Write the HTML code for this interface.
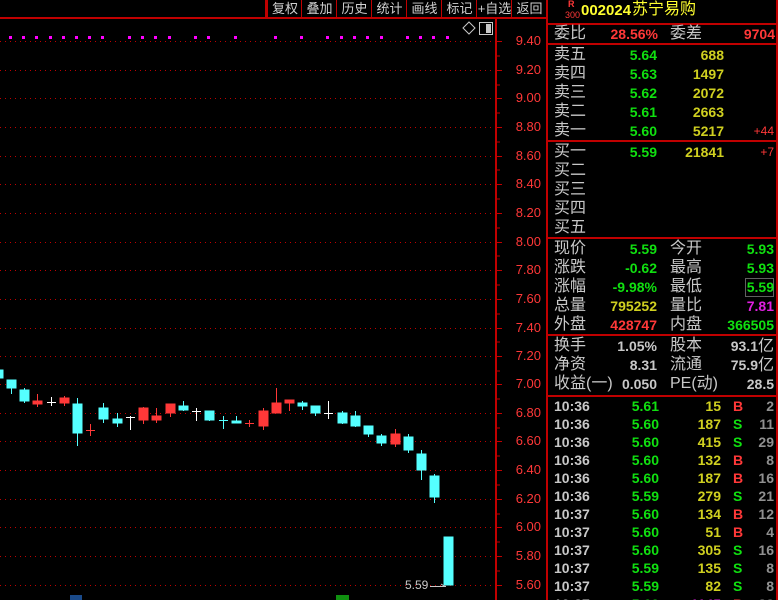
<!DOCTYPE html>
<html style="width:778px;height:600px;overflow:hidden"><head><meta charset="utf-8"><style>
*{margin:0;padding:0}
body{width:778px;height:600px;background:#000;position:relative;overflow:hidden;font-family:"Liberation Sans","Noto Sans CJK SC",sans-serif}
.a{position:absolute;white-space:nowrap;line-height:18px}
.c{font-size:16px;color:#c8c8c8}
.n{font-size:14px;font-weight:bold}
.r{text-align:right}
.g{color:#10e010}.y{color:#d0d020}.rd{color:#ff3838}.w{color:#c8c8c8}.m{color:#e020e0}.gr{color:#909090}
.tb{position:absolute;top:0;height:18px;font-size:13px;color:#d0d0d0;line-height:18px;text-align:center;border-left:1px solid #c00000;white-space:nowrap;overflow:hidden}
.ax{position:absolute;left:500px;width:41px;text-align:right;font-size:13px;color:#ff3838;line-height:14px}
</style></head><body>
<svg width="778" height="600" style="position:absolute;left:0;top:0">
<g stroke="#c00000" stroke-width="1" stroke-dasharray="1,4">
<line x1="0" y1="41.5" x2="495" y2="41.5"/><line x1="0" y1="70.5" x2="495" y2="70.5"/><line x1="0" y1="98.5" x2="495" y2="98.5"/><line x1="0" y1="127.5" x2="495" y2="127.5"/><line x1="0" y1="156.5" x2="495" y2="156.5"/><line x1="0" y1="184.5" x2="495" y2="184.5"/><line x1="0" y1="213.5" x2="495" y2="213.5"/><line x1="0" y1="242.5" x2="495" y2="242.5"/><line x1="0" y1="270.5" x2="495" y2="270.5"/><line x1="0" y1="299.5" x2="495" y2="299.5"/><line x1="0" y1="328.5" x2="495" y2="328.5"/><line x1="0" y1="356.5" x2="495" y2="356.5"/><line x1="0" y1="384.5" x2="495" y2="384.5"/><line x1="0" y1="413.5" x2="495" y2="413.5"/><line x1="0" y1="441.5" x2="495" y2="441.5"/><line x1="0" y1="470.5" x2="495" y2="470.5"/><line x1="0" y1="499.5" x2="495" y2="499.5"/><line x1="0" y1="527.5" x2="495" y2="527.5"/><line x1="0" y1="556.5" x2="495" y2="556.5"/><line x1="0" y1="585.5" x2="495" y2="585.5"/>
</g>
<g stroke="#c00000" stroke-width="2"><line x1="496" y1="18" x2="496" y2="600"/><line x1="547" y1="0" x2="547" y2="600"/><line x1="0" y1="18" x2="547" y2="18"/><line x1="266" y1="0" x2="266" y2="18"/></g>
<g stroke="#c00000"><path d="M496 41.5h6M496 56h4M496 70.5h6M496 85h4M496 98.5h6M496 113h4M496 127.5h6M496 142h4M496 156.5h6M496 170h4M496 184.5h6M496 199h4M496 213.5h6M496 228h4M496 242.5h6M496 256h4M496 270.5h6M496 285h4M496 299.5h6M496 314h4M496 328.5h6M496 342h4M496 356.5h6M496 371h4M496 384.5h6M496 399h4M496 413.5h6M496 428h4M496 441.5h6M496 456h4M496 470.5h6M496 485h4M496 499.5h6M496 514h4M496 527.5h6M496 542h4M496 556.5h6M496 571h4M496 585.5h6"/></g>
<g fill="#ff00ff"><rect x="9" y="36" width="3" height="3"/><rect x="22" y="36" width="3" height="3"/><rect x="35" y="36" width="3" height="3"/><rect x="49" y="36" width="3" height="3"/><rect x="62" y="36" width="3" height="3"/><rect x="75" y="36" width="3" height="3"/><rect x="88" y="36" width="3" height="3"/><rect x="101" y="36" width="3" height="3"/><rect x="128" y="36" width="3" height="3"/><rect x="141" y="36" width="3" height="3"/><rect x="154" y="36" width="3" height="3"/><rect x="168" y="36" width="3" height="3"/><rect x="194" y="36" width="3" height="3"/><rect x="207" y="36" width="3" height="3"/><rect x="234" y="36" width="3" height="3"/><rect x="274" y="36" width="3" height="3"/><rect x="300" y="36" width="3" height="3"/><rect x="326" y="36" width="3" height="3"/><rect x="340" y="36" width="3" height="3"/><rect x="353" y="36" width="3" height="3"/><rect x="366" y="36" width="3" height="3"/><rect x="380" y="36" width="3" height="3"/><rect x="406" y="36" width="3" height="3"/><rect x="419" y="36" width="3" height="3"/><rect x="432" y="36" width="3" height="3"/><rect x="446" y="36" width="3" height="3"/></g>
<path d="M463 28l6-6 6 6-6 6z" fill="none" stroke="#c8c8c8"/>
<rect x="479.5" y="22.5" width="13" height="12" fill="none" stroke="#c8c8c8"/><rect x="486" y="24" width="5" height="9" fill="#c8c8c8"/>
<g stroke="#55ffff" fill="#55ffff">
<rect x="0" y="370" width="3" height="8"/>
<line x1="11.5" y1="380" x2="11.5" y2="394"/><rect x="7" y="380" width="9" height="8"/>
<line x1="24.5" y1="388" x2="24.5" y2="403"/><rect x="20" y="390" width="9" height="11"/>
<line x1="77.5" y1="398" x2="77.5" y2="446"/><rect x="73" y="404" width="9" height="29"/>
<line x1="103.5" y1="403" x2="103.5" y2="423"/><rect x="99" y="408" width="9" height="11"/>
<line x1="117.5" y1="413" x2="117.5" y2="427"/><rect x="113" y="419" width="9" height="4"/>
<line x1="183.5" y1="401" x2="183.5" y2="411"/><rect x="179" y="406" width="9" height="4"/>
<line x1="209.5" y1="411" x2="209.5" y2="421"/><rect x="205" y="411" width="9" height="9"/>
<line x1="223.5" y1="416" x2="223.5" y2="429"/><line x1="219" y1="420.5" x2="228" y2="420.5"/>
<line x1="236.5" y1="416" x2="236.5" y2="423"/><rect x="232" y="421" width="9" height="2"/>
<line x1="302.5" y1="401" x2="302.5" y2="410"/><rect x="298" y="403" width="9" height="3"/>
<line x1="315.5" y1="406" x2="315.5" y2="416"/><rect x="311" y="406" width="9" height="7"/>
<line x1="342.5" y1="411" x2="342.5" y2="424"/><rect x="338" y="413" width="9" height="10"/>
<line x1="355.5" y1="411" x2="355.5" y2="427"/><rect x="351" y="416" width="9" height="10"/>
<line x1="368.5" y1="426" x2="368.5" y2="437"/><rect x="364" y="426" width="9" height="8"/>
<line x1="381.5" y1="434" x2="381.5" y2="446"/><rect x="377" y="436" width="9" height="7"/>
<line x1="408.5" y1="434" x2="408.5" y2="453"/><rect x="404" y="437" width="9" height="13"/>
<line x1="421.5" y1="450" x2="421.5" y2="480"/><rect x="417" y="454" width="9" height="16"/>
<line x1="434.5" y1="474" x2="434.5" y2="503"/><rect x="430" y="476" width="9" height="21"/>
<rect x="444" y="537" width="9" height="48"/>
</g>
<g stroke="#ff3838" fill="#ff3838">
<line x1="37.5" y1="394" x2="37.5" y2="407"/><rect x="33" y="401" width="9" height="3"/>
<line x1="64.5" y1="396" x2="64.5" y2="406"/><rect x="60" y="398" width="9" height="5"/>
<line x1="90.5" y1="424" x2="90.5" y2="436"/><line x1="86" y1="430.5" x2="95" y2="430.5"/>
<line x1="143.5" y1="407" x2="143.5" y2="424"/><rect x="139" y="408" width="9" height="12"/>
<line x1="156.5" y1="408" x2="156.5" y2="423"/><rect x="152" y="416" width="9" height="4"/>
<line x1="170.5" y1="404" x2="170.5" y2="417"/><rect x="166" y="404" width="9" height="9"/>
<line x1="249.5" y1="420" x2="249.5" y2="427"/><line x1="245" y1="423.5" x2="254" y2="423.5"/>
<line x1="263.5" y1="408" x2="263.5" y2="430"/><rect x="259" y="411" width="9" height="15"/>
<line x1="276.5" y1="388" x2="276.5" y2="413"/><rect x="272" y="403" width="9" height="10"/>
<line x1="289.5" y1="400" x2="289.5" y2="411"/><rect x="285" y="400" width="9" height="3"/>
<line x1="395.5" y1="429" x2="395.5" y2="447"/><rect x="391" y="434" width="9" height="10"/>
</g>
<g stroke="#ffffff">
<line x1="51.5" y1="397" x2="51.5" y2="406"/><line x1="47" y1="402.5" x2="56" y2="402.5"/>
<line x1="130.5" y1="416" x2="130.5" y2="430"/><line x1="126" y1="417.5" x2="135" y2="417.5"/>
<line x1="196.5" y1="408" x2="196.5" y2="421"/><line x1="192" y1="411.5" x2="201" y2="411.5"/>
<line x1="328.5" y1="401" x2="328.5" y2="419"/><line x1="324" y1="413.5" x2="333" y2="413.5"/>
</g>
<path d="M430 586.5h16M441 584l4 2.5" stroke="#c8c8c8" fill="none"/>
<rect x="70" y="595" width="12" height="5" fill="#1a4a8a"/><rect x="336" y="595" width="13" height="5" fill="#109010"/>
<g stroke="#c00000" stroke-width="2"><line x1="547" y1="24" x2="778" y2="24"/><line x1="547" y1="44" x2="778" y2="44"/><line x1="547" y1="141" x2="778" y2="141"/><line x1="547" y1="238" x2="778" y2="238"/><line x1="547" y1="335" x2="778" y2="335"/><line x1="547" y1="396" x2="778" y2="396"/><line x1="777" y1="0" x2="777" y2="600"/></g>
<rect x="745.5" y="278.5" width="28" height="18" fill="none" stroke="#606060"/>
</svg>
<div class="tb" style="left:267px;width:34px">复权</div><div class="tb" style="left:301px;width:35px">叠加</div><div class="tb" style="left:336px;width:35px">历史</div><div class="tb" style="left:371px;width:35px">统计</div><div class="tb" style="left:406px;width:35px">画线</div><div class="tb" style="left:441px;width:35px">标记</div><div class="tb" style="left:476px;width:35px">+自选</div><div class="tb" style="left:511px;width:35px">返回</div>
<div class="ax" style="top:34px">9.40</div><div class="ax" style="top:63px">9.20</div><div class="ax" style="top:91px">9.00</div><div class="ax" style="top:120px">8.80</div><div class="ax" style="top:149px">8.60</div><div class="ax" style="top:177px">8.40</div><div class="ax" style="top:206px">8.20</div><div class="ax" style="top:235px">8.00</div><div class="ax" style="top:263px">7.80</div><div class="ax" style="top:292px">7.60</div><div class="ax" style="top:321px">7.40</div><div class="ax" style="top:349px">7.20</div><div class="ax" style="top:377px">7.00</div><div class="ax" style="top:406px">6.80</div><div class="ax" style="top:434px">6.60</div><div class="ax" style="top:463px">6.40</div><div class="ax" style="top:492px">6.20</div><div class="ax" style="top:520px">6.00</div><div class="ax" style="top:549px">5.80</div><div class="ax" style="top:578px">5.60</div>
<div class="a" style="left:405px;top:578px;font-size:12px;line-height:14px;color:#c8c8c8">5.59</div>
<div class="a rd" style="left:568px;top:0;font-size:9px;line-height:9px;font-weight:bold">R</div>
<div class="a rd" style="left:565px;top:10px;font-size:9px;line-height:10px">300</div>
<div class="a" style="left:581px;top:2px;font-size:15px;font-weight:bold;color:#ffff30">002024</div>
<div class="a" style="left:632px;top:1px;font-size:16px;color:#ffff30">苏宁易购</div>
<div class="a c" style="left:554px;top:25px">委比</div><div class="a n rd r" style="left:590px;width:68px;top:25px">28.56%</div><div class="a c" style="left:670px;top:25px">委差</div><div class="a n rd r" style="left:720px;width:55px;top:25px">9704</div>
<div class="a c" style="left:554px;top:46px">卖五</div><div class="a n g r" style="left:600px;width:57px;top:46px">5.64</div><div class="a n y r" style="left:670px;width:54px;top:46px">688</div>
<div class="a c" style="left:554px;top:65px">卖四</div><div class="a n g r" style="left:600px;width:57px;top:65px">5.63</div><div class="a n y r" style="left:670px;width:54px;top:65px">1497</div>
<div class="a c" style="left:554px;top:84px">卖三</div><div class="a n g r" style="left:600px;width:57px;top:84px">5.62</div><div class="a n y r" style="left:670px;width:54px;top:84px">2072</div>
<div class="a c" style="left:554px;top:103px">卖二</div><div class="a n g r" style="left:600px;width:57px;top:103px">5.61</div><div class="a n y r" style="left:670px;width:54px;top:103px">2663</div>
<div class="a c" style="left:554px;top:122px">卖一</div><div class="a n g r" style="left:600px;width:57px;top:122px">5.60</div><div class="a n y r" style="left:670px;width:54px;top:122px">5217</div><div class="a rd r" style="left:730px;width:44px;top:122px;font-size:12px">+44</div>
<div class="a c" style="left:554px;top:143px">买一</div><div class="a n g r" style="left:600px;width:57px;top:143px">5.59</div><div class="a n y r" style="left:670px;width:54px;top:143px">21841</div><div class="a rd r" style="left:730px;width:44px;top:143px;font-size:12px">+7</div>
<div class="a c" style="left:554px;top:162px">买二</div><div class="a c" style="left:554px;top:181px">买三</div><div class="a c" style="left:554px;top:200px">买四</div><div class="a c" style="left:554px;top:219px">买五</div>
<div class="a c" style="left:554px;top:240px">现价</div><div class="a n g r" style="left:590px;width:67px;top:240px">5.59</div><div class="a c" style="left:670px;top:240px">今开</div><div class="a n g r" style="left:720px;width:54px;top:240px">5.93</div>
<div class="a c" style="left:554px;top:259px">涨跌</div><div class="a n g r" style="left:590px;width:67px;top:259px">-0.62</div><div class="a c" style="left:670px;top:259px">最高</div><div class="a n g r" style="left:720px;width:54px;top:259px">5.93</div>
<div class="a c" style="left:554px;top:278px">涨幅</div><div class="a n g r" style="left:590px;width:67px;top:278px">-9.98%</div><div class="a c" style="left:670px;top:278px">最低</div><div class="a n g r" style="left:720px;width:54px;top:278px">5.59</div>
<div class="a c" style="left:554px;top:297px">总量</div><div class="a n y r" style="left:590px;width:67px;top:297px">795252</div><div class="a c" style="left:670px;top:297px">量比</div><div class="a n m r" style="left:720px;width:54px;top:297px">7.81</div>
<div class="a c" style="left:554px;top:316px">外盘</div><div class="a n rd r" style="left:590px;width:67px;top:316px">428747</div><div class="a c" style="left:670px;top:316px">内盘</div><div class="a n g r" style="left:700px;width:74px;top:316px">366505</div>
<div class="a c" style="left:554px;top:337px">换手</div><div class="a n w r" style="left:590px;width:67px;top:337px">1.05%</div><div class="a c" style="left:670px;top:337px">股本</div><div class="a w r" style="left:700px;width:74px;top:337px;font-size:14px;font-weight:bold">93.1<span style="font-weight:normal;font-size:16px">亿</span></div>
<div class="a c" style="left:554px;top:356px">净资</div><div class="a n w r" style="left:590px;width:67px;top:356px">8.31</div><div class="a c" style="left:670px;top:356px">流通</div><div class="a w r" style="left:700px;width:74px;top:356px;font-size:14px;font-weight:bold">75.9<span style="font-weight:normal;font-size:16px">亿</span></div>
<div class="a c" style="left:554px;top:375px">收益(一)</div><div class="a n w r" style="left:590px;width:67px;top:375px">0.050</div><div class="a c" style="left:670px;top:375px">PE(动)</div><div class="a n w r" style="left:720px;width:54px;top:375px">28.5</div>
<div style="position:absolute;left:554px;top:397px;width:222px;height:203px;overflow:hidden;font-size:14px;font-weight:bold;line-height:18px">
<div style="position:relative;height:18px"><span class="w" style="position:absolute;left:0">10:36</span><span class="g" style="position:absolute;right:117px">5.61</span><span class="y" style="position:absolute;right:55px">15</span><span class="rd" style="position:absolute;left:179px">B</span><span class="gr" style="position:absolute;right:2px">2</span></div>
<div style="position:relative;height:18px"><span class="w" style="position:absolute;left:0">10:36</span><span class="g" style="position:absolute;right:117px">5.60</span><span class="y" style="position:absolute;right:55px">187</span><span class="g" style="position:absolute;left:179px">S</span><span class="gr" style="position:absolute;right:2px">11</span></div>
<div style="position:relative;height:18px"><span class="w" style="position:absolute;left:0">10:36</span><span class="g" style="position:absolute;right:117px">5.60</span><span class="y" style="position:absolute;right:55px">415</span><span class="g" style="position:absolute;left:179px">S</span><span class="gr" style="position:absolute;right:2px">29</span></div>
<div style="position:relative;height:18px"><span class="w" style="position:absolute;left:0">10:36</span><span class="g" style="position:absolute;right:117px">5.60</span><span class="y" style="position:absolute;right:55px">132</span><span class="rd" style="position:absolute;left:179px">B</span><span class="gr" style="position:absolute;right:2px">8</span></div>
<div style="position:relative;height:18px"><span class="w" style="position:absolute;left:0">10:36</span><span class="g" style="position:absolute;right:117px">5.60</span><span class="y" style="position:absolute;right:55px">187</span><span class="rd" style="position:absolute;left:179px">B</span><span class="gr" style="position:absolute;right:2px">16</span></div>
<div style="position:relative;height:18px"><span class="w" style="position:absolute;left:0">10:36</span><span class="g" style="position:absolute;right:117px">5.59</span><span class="y" style="position:absolute;right:55px">279</span><span class="g" style="position:absolute;left:179px">S</span><span class="gr" style="position:absolute;right:2px">21</span></div>
<div style="position:relative;height:18px"><span class="w" style="position:absolute;left:0">10:37</span><span class="g" style="position:absolute;right:117px">5.60</span><span class="y" style="position:absolute;right:55px">134</span><span class="rd" style="position:absolute;left:179px">B</span><span class="gr" style="position:absolute;right:2px">12</span></div>
<div style="position:relative;height:18px"><span class="w" style="position:absolute;left:0">10:37</span><span class="g" style="position:absolute;right:117px">5.60</span><span class="y" style="position:absolute;right:55px">51</span><span class="rd" style="position:absolute;left:179px">B</span><span class="gr" style="position:absolute;right:2px">4</span></div>
<div style="position:relative;height:18px"><span class="w" style="position:absolute;left:0">10:37</span><span class="g" style="position:absolute;right:117px">5.60</span><span class="y" style="position:absolute;right:55px">305</span><span class="g" style="position:absolute;left:179px">S</span><span class="gr" style="position:absolute;right:2px">16</span></div>
<div style="position:relative;height:18px"><span class="w" style="position:absolute;left:0">10:37</span><span class="g" style="position:absolute;right:117px">5.59</span><span class="y" style="position:absolute;right:55px">135</span><span class="g" style="position:absolute;left:179px">S</span><span class="gr" style="position:absolute;right:2px">8</span></div>
<div style="position:relative;height:18px"><span class="w" style="position:absolute;left:0">10:37</span><span class="g" style="position:absolute;right:117px">5.59</span><span class="y" style="position:absolute;right:55px">82</span><span class="g" style="position:absolute;left:179px">S</span><span class="gr" style="position:absolute;right:2px">8</span></div>
<div style="position:relative;height:18px"><span class="w" style="position:absolute;left:0">10:37</span><span class="g" style="position:absolute;right:117px">5.60</span><span class="m" style="position:absolute;right:55px">1145</span><span class="rd" style="position:absolute;left:179px">B</span><span class="gr" style="position:absolute;right:2px">33</span></div>
</div>
</body></html>
